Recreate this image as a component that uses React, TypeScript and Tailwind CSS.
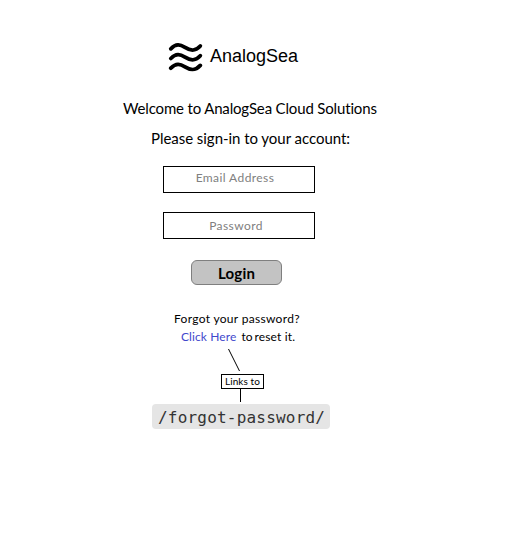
export default function App() {
  return (
    <main className="flex h-[533px] w-[510px] flex-col items-start overflow-hidden whitespace-nowrap bg-white font-['Lato',sans-serif] text-black [font-variant-ligatures:none]">
      <header className="ml-[168px] mt-[40px] flex h-8 items-center">
        <svg className="h-8 w-9" viewBox="0 0 36 32" fill="none" stroke="#000" strokeWidth="3.8" strokeLinecap="round">
          <path d="M2.800 8.800C8 3.500 12 4.300 17 7.400C23 11.300 27.500 11.300 32.300 6" />
          <path d="M2.800 18.500C8 13.200 12 14 17 17.100C23 21 27.500 21 32.300 15.700" />
          <path d="M2.800 28.200C8 22.900 12 23.700 17 26.800C23 30.700 27.500 30.700 32.300 25.400" />
        </svg>
        <span className="ml-[6px] font-['Liberation_Sans',sans-serif] text-[18px] leading-8">AnalogSea</span>
      </header>

      <h1 className="ml-[123px] mt-[26px] text-[15px] leading-5 tracking-[-0.16px]">Welcome to AnalogSea Cloud Solutions</h1>
      <p className="ml-[151px] mt-[10px] text-[15px] leading-5 tracking-[-0.04px]">Please sign-in to your account:</p>

      <form className="ml-[163px] mt-[18px] flex w-[152px] flex-col">
        <div className="flex h-[27px] justify-center border border-black pr-[8px] text-[12px] leading-[21px] tracking-[0.42px] text-[#808080]">
          Email Address
        </div>
        <div className="mt-[19px] flex h-[27px] justify-center border border-black pr-[6px] text-[12px] leading-[25px] tracking-[0.42px] text-[#808080]">
          Password
        </div>
        <button type="button" className="ml-[28px] mt-[21px] h-[25px] w-[91px] rounded-[6px] border border-[#7f7f7f] bg-[#c3c3c3] text-[15px] font-bold leading-[25px] tracking-[0.2px]">
          Login
        </button>
      </form>

      <p className="ml-[174px] mt-[25px] text-[12px] leading-[18px] tracking-[0.31px]">Forgot your password?</p>
      <p className="ml-[181px] flex text-[12px] leading-[18px]">
        <a className="tracking-[0.1px] text-[#3f48cc]">Click Here</a>
        <span className="ml-[5px] tracking-[0.15px]"><span className="[word-spacing:-1.5px]">to </span>reset it.</span>
      </p>

      <svg className="ml-[220px] mt-[3px] h-[24px] w-[30px]" viewBox="0 0 30 24" stroke="#000" strokeWidth="1">
        <path d="M8.500 0L19.500 22" />
      </svg>
      <div className="ml-[221px] mt-[1px] flex h-[15px] w-[43px] items-center justify-center border border-black text-[10px] leading-[13px] tracking-[0.1px]">Links to</div>
      <div className="ml-[240px] h-[13px] w-px bg-black" />
      <code className="ml-[152px] mt-[2px] h-[25px] w-[178px] rounded-[4px] bg-[#e5e5e5] pl-[6px] font-['DejaVu_Sans_Mono',monospace] text-[16px] leading-[27px] tracking-[0.2px] text-[#333]">/forgot-password/</code>
    </main>
  );
}
